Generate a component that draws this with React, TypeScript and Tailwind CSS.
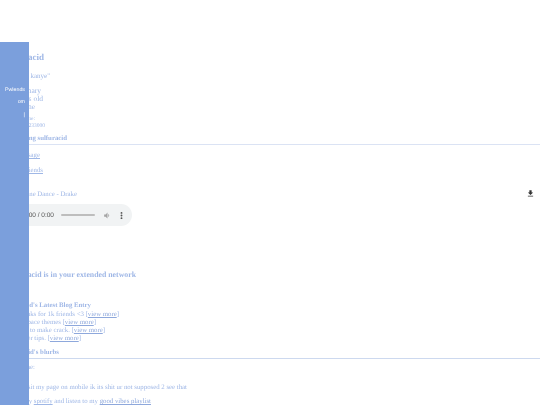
import React from "react";

function ViewMore() {
  return <>[<span className="underline text-[#8ea8dc]">view more</span>]</>;
}

export default function App() {
  return (
    <div className="relative w-[540px] h-[405px] overflow-hidden bg-white font-['Liberation_Serif',serif] text-[#9fb7e6] whitespace-nowrap [text-rendering:geometricPrecision] blur-[0.35px]">
      <div className="absolute left-0 top-[42px] bottom-0 w-[29px] bg-[#7b9fdc] z-10 flex flex-col items-end pt-[42px] pr-[4px] font-['Liberation_Sans',sans-serif] text-[5.3px] text-white">
        <div className="h-[12px] leading-[12px]">Pwlends</div>
        <div className="h-[13px] leading-[13px]">om</div>
        <div className="h-[12px] leading-[12px]">|</div>
      </div>

      <div className="pt-[50px]">
        <h1 className="w-[44px] text-right h-[14px] leading-[14px] text-[9px] font-bold">sulfuracid</h1>
        <div className="w-[50px] text-right mt-[6px] h-[12px] leading-[12px] text-[7px]">"i miss kanye"</div>
        <div className="mt-[5px] text-[7.5px] leading-[8px] text-right">
          <div className="w-[41px]">binary</div>
          <div className="w-[43px]">21 yrs old</div>
          <div className="w-[35px]">Mine</div>
        </div>
        <div className="mt-[5px] text-[5.5px] leading-[7px] text-right">
          <div className="w-[35px]">Online:</div>
          <div className="w-[45px]">1672233000</div>
        </div>
        <div className="w-[67px] text-right mt-[4px] h-[9px] leading-[9px] text-[6.8px] font-bold">Contacting sulfuracid</div>
      </div>
      <div className="mt-[1px] h-[1px] bg-[#dbe3f4]" />

      <div>
        <div className="w-[40px] text-right mt-[6px] h-[9px] leading-[9px] text-[6.8px] underline">Message</div>
        <div className="w-[43px] text-right mt-[6px] h-[9px] leading-[9px] text-[6.8px] underline">Friends</div>
        <div className="mt-[15px] h-[9px] leading-[9px] text-[6.8px] flex justify-between items-center">
          <span className="w-[77px] text-right">One Dance - Drake</span>
          <svg viewBox="0 0 24 24" className="w-[9px] h-[9px] mr-[5px] mb-[2px] fill-[#333]">
            <path d="M19 9h-4V3H9v6H5l7 7 7-7zM5 18v2h14v-2H5z" />
          </svg>
        </div>
        <div className="mt-[5px] h-[22px] w-[132px] rounded-r-full bg-[#f1f3f4] flex items-center text-[#555] font-['Liberation_Sans',sans-serif] text-[6.5px]">
          <span className="w-[54px] text-right pt-[2px]">0:00 / 0:00</span>
          <div className="ml-[7px] w-[34px] h-[1.5px] bg-[#bdbdbd] rounded-full" />
          <svg viewBox="0 0 24 24" className="ml-[8px] w-[9px] h-[9px] fill-[#a5a5a5]">
            <path d="M3 9v6h4l5 5V4L7 9H3zm13.5 3A4.5 4.5 0 0 0 14 8v8a4.5 4.5 0 0 0 2.5-4z" />
          </svg>
          <svg viewBox="0 0 24 24" className="ml-[5px] w-[9px] h-[9px] fill-[#555]">
            <circle cx="12" cy="5" r="2.5" />
            <circle cx="12" cy="12" r="2.5" />
            <circle cx="12" cy="19" r="2.5" />
          </svg>
        </div>
        <div className="w-[136px] text-right mt-[43px] h-[12px] leading-[12px] text-[7.8px] font-bold">uracid is in your extended network</div>
        <div className="w-[91px] text-right mt-[21px] h-[8px] leading-[8px] text-[6.8px] font-bold">uracid's Latest Blog Entry</div>
        <div className="text-[6.8px] leading-[8px] mt-[1px] text-right">
          <div className="w-[119px]">thanks for 1k friends &lt;3 <ViewMore /></div>
          <div className="w-[96px]">myspace themes <ViewMore /></div>
          <div className="w-[105px]">how to make crack. <ViewMore /></div>
          <div className="w-[81px]">hamster tips. <ViewMore /></div>
        </div>
        <div className="w-[59px] text-right mt-[5px] h-[9px] leading-[9px] text-[6.8px] font-bold">uracid's blurbs</div>
      </div>
      <div className="mt-[1px] h-[1px] bg-[#cdd9ef]" />
      <div className="text-[6.8px] leading-[9px] text-right">
        <div className="w-[35px] mt-[4px]">Name:</div>
        <div className="w-[187px] mt-[11px]">visit my page on mobile ik its shit ur not supposed 2 see that</div>
        <div className="w-[151px] mt-[5px]">my <span className="underline">spotify</span> and listen to my <span className="underline text-[#8ea8dc]">good vibes playlist</span></div>
      </div>
    </div>
  );
}
